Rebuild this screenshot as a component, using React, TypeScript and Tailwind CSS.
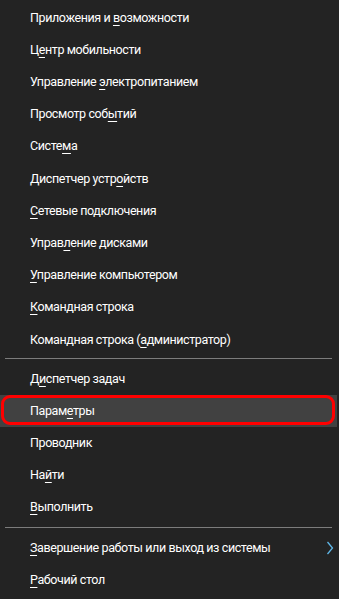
import React from "react";

type Item = { pre: string; key?: string; post?: string; highlight?: boolean; arrow?: boolean };

const group1: Item[] = [
  { pre: "Приложения и ", key: "в", post: "озможности" },
  { pre: "Ц", key: "е", post: "нтр мобильности" },
  { pre: "Управление ", key: "э", post: "лектропитанием" },
  { pre: "Просмотр соб", key: "ы", post: "тий" },
  { pre: "Систе", key: "м", post: "а" },
  { pre: "Диспетчер устр", key: "о", post: "йств" },
  { pre: "", key: "С", post: "етевые подключения" },
  { pre: "Управ", key: "л", post: "ение дисками" },
  { pre: "", key: "У", post: "правление компьютером" },
  { pre: "", key: "К", post: "омандная строка" },
  { pre: "Командная строка (", key: "а", post: "дминистратор)" },
];

const group2: Item[] = [
  { pre: "Д", key: "и", post: "спетчер задач" },
  { pre: "Парам", key: "е", post: "тры", highlight: true },
  { pre: "Проводник" },
  { pre: "На", key: "й", post: "ти" },
  { pre: "", key: "В", post: "ыполнить" },
];

const group3: Item[] = [
  { pre: "", key: "З", post: "авершение работы или выход из системы", arrow: true },
  { pre: "", key: "Р", post: "абочий стол" },
];

function Row({ item, h }: { item: Item; h: string }) {
  return (
    <div className={`relative flex items-center pl-[30px] ${h} ${item.highlight ? "bg-[#414141]" : ""}`}>
      {item.highlight && (
        <div className="absolute left-[1px] right-[2px] top-0 bottom-[2px] rounded-[9px] border-[3px] border-[#ff0000]" />
      )}
      <span className="relative whitespace-nowrap">
        {item.pre}
        {item.key && <span className="underline decoration-1 underline-offset-[3px]">{item.key}</span>}
        {item.post}
      </span>
      {item.arrow && (
        <svg className="absolute right-[3px] top-[9px]" width="8" height="14" viewBox="0 0 8 14">
          <polyline points="1.5,1 6.5,7 1.5,13" fill="none" stroke="#5fb6e6" strokeWidth="1.3" />
        </svg>
      )}
    </div>
  );
}

function Sep({ cls }: { cls: string }) {
  return <div className={`mx-[5px] h-px bg-[#7c7c7c] ${cls}`} />;
}

export default function App() {
  return (
    <div
      className="w-[339px] h-[599px] bg-[#232323] text-white text-[12.5px] tracking-[-0.4px] overflow-hidden"
      style={{ fontFamily: 'Roboto, "Noto Sans", sans-serif' }}
    >
      <div className="w-[337px] pt-[2px]">
        {group1.map((it, i) => (
          <Row key={i} item={it} h="h-[32.2px]" />
        ))}
        <Sep cls="mt-[2px] mb-[4px]" />
        {group2.map((it, i) => (
          <Row key={i} item={it} h="h-[32px]" />
        ))}
        <Sep cls="mt-[4px] mb-[4px]" />
        {group3.map((it, i) => (
          <Row key={i} item={it} h="h-[32px]" />
        ))}
      </div>
    </div>
  );
}
